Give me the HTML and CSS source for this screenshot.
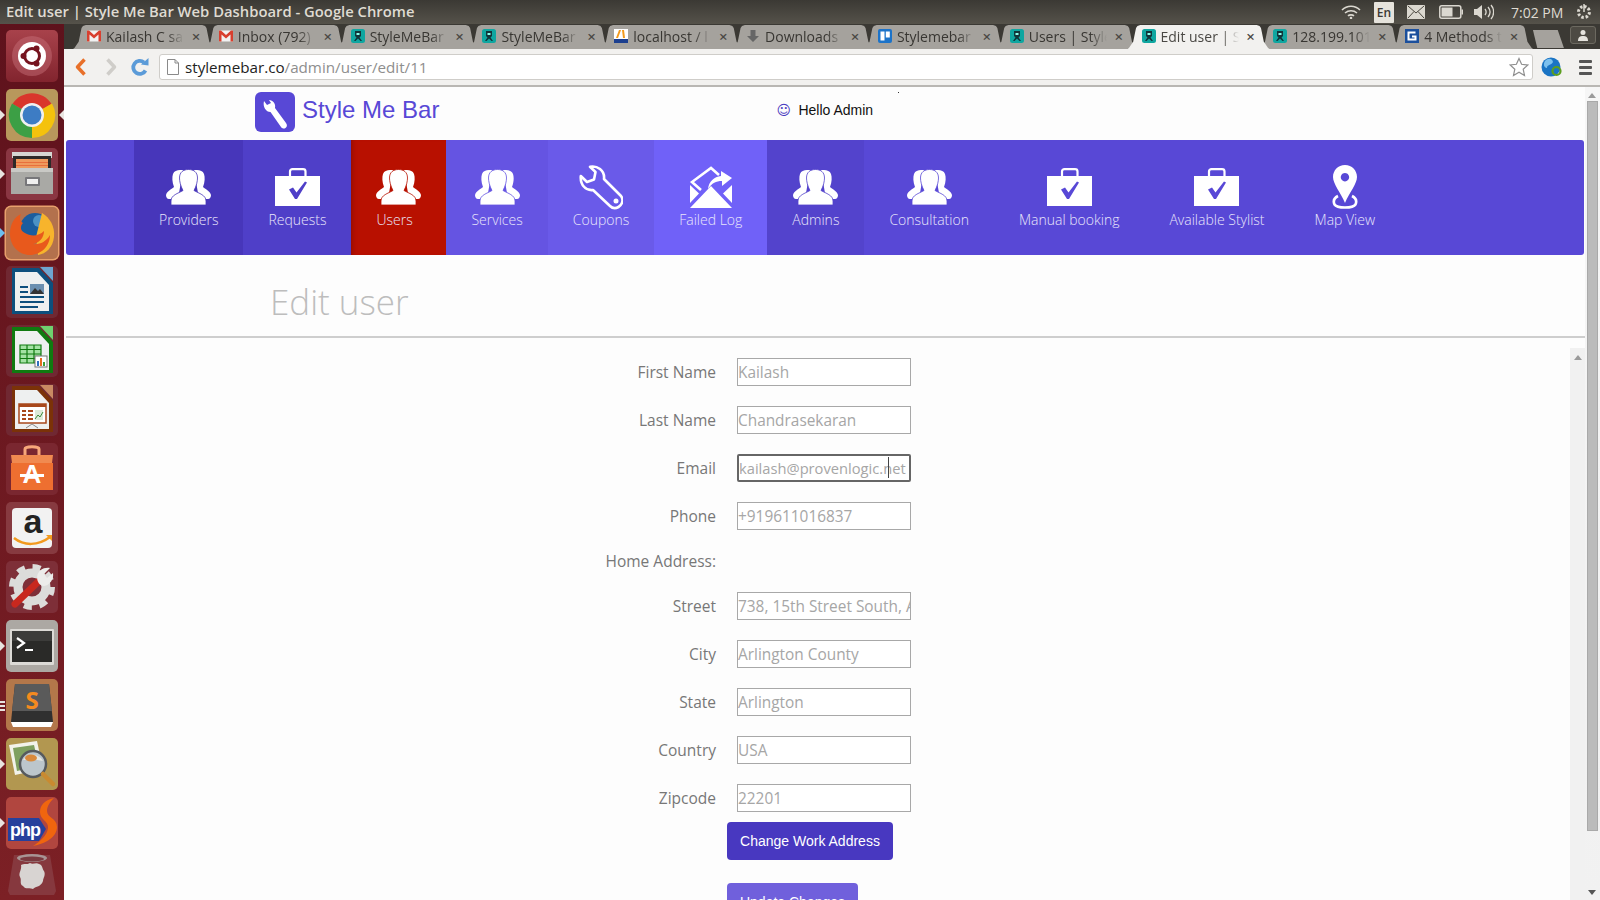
FILE: index.html
```html
<!DOCTYPE html>
<html lang="en">
<head>
<meta charset="utf-8">
<title>Edit user | Style Me Bar Web Dashboard</title>
<link rel="stylesheet" href="styles.css">
</head>
<body>
<svg class="defs" aria-hidden="true">
  <symbol id="i-people" viewBox="0 0 45 36">
    <path fill="#fff" d="M0 26C1 22 6 20 8 18 6 13 6 8 7 5 8 2 11 1 14 1L17 1 12 30H3C1 30 0 28 0 26Z"/>
    <path fill="#fff" d="M45 26C44 22 39 20 37 18 39 13 39 8 38 5 37 2 34 1 31 1L28 1 33 30H42C44 30 45 28 45 26Z"/>
    <path class="cut" fill="#fff" d="M5 36V32C5 26 12 24.500 17 21.500 14.500 17 13.500 12 13.500 9 13.500 3 17.500 .5 22.500 .5 27.500 .5 31.500 3 31.500 9 31.500 12 30.500 17 28 21.500 33 24.500 40 26 40 32V36Z"/>
  </symbol>
  <symbol id="i-case" viewBox="0 0 45 38">
    <path fill="none" stroke="#fff" stroke-width="2.200" d="M15 8V3.500C15 2 16 1.200 17.500 1.200H28C29.500 1.200 30.500 2 30.500 3.500V8"/>
    <path fill="#fff" d="M0 8H45V38H0Z"/>
    <path class="chk" d="M14 21.500L18 19.500 21.500 24.500 30 13.500 32 14.500 22 31H20Z"/>
  </symbol>
  <symbol id="fav-s" viewBox="0 0 14 14">
    <rect width="14" height="14" rx="2.500" fill="#0fa6a0"/>
    <path fill="#12343a" d="M4 2H10V7L8.500 8.500 11 12H9.500L7 9.500 4.500 12H3L5.500 8.500 4 7Z"/>
    <path fill="#8fe" d="M5.500 4H8.500V6H5.500Z"/>
  </symbol>
  <symbol id="fav-m" viewBox="0 0 14 14">
    <rect y="1.500" width="14" height="11" fill="#f2f2f2"/>
    <path fill="#d8402f" d="M0 1.500H2L7 6 12 1.500H14V12.500H11.500V5.500L7 9.500 2.500 5.500V12.500H0Z"/>
  </symbol>
</svg>

<div class="screen">
  <header class="titlebar">
    <span class="win-title">Edit user | Style Me Bar Web Dashboard - Google Chrome</span>
    <div class="indicators">
      <svg class="ind-wifi" viewBox="0 0 20 14" width="20" height="14"><path fill="none" stroke="#dbd8d0" stroke-width="1.600" d="M1 5C6 0 14 0 19 5M4 8C7.500 5 12.500 5 16 8M7 10.800C8.500 9.500 11.500 9.500 13 10.800"/><circle cx="10" cy="13" r="1.300" fill="#dbd8d0"/></svg>
      <span class="ind-en">En</span>
      <svg class="ind-mail" viewBox="0 0 18 14" width="18" height="14"><rect width="18" height="14" rx="1" fill="#dbd8d0"/><path fill="none" stroke="#4a473f" d="M1 1L9 8 17 1M1 13L7 6.500M17 13L11 6.500"/></svg>
      <svg class="ind-batt" viewBox="0 0 24 14" width="24" height="14"><rect x=".8" y=".8" width="21" height="12.400" rx="2" fill="none" stroke="#dbd8d0" stroke-width="1.500"/><rect x="2.500" y="2.500" width="11" height="9" fill="#dbd8d0"/><rect x="22.500" y="4.500" width="1.500" height="5" fill="#dbd8d0"/></svg>
      <svg class="ind-vol" viewBox="0 0 20 16" width="20" height="16"><path fill="#dbd8d0" d="M0 5H3L8 1V15L3 11H0Z"/><path fill="none" stroke="#dbd8d0" stroke-width="1.300" d="M11 5C12.500 7 12.500 9 11 11M14 3C16.500 6 16.500 10 14 13M17 1C20.500 5 20.500 11 17 15"/></svg>
      <span class="ind-time">7:02 PM</span>
      <svg class="ind-gear" viewBox="0 0 16 18" width="16" height="18"><path fill="none" stroke="#dbd8d0" stroke-width="3" stroke-dasharray="2.500 1.800" d="M8 3.500A5.500 5.500 0 1 1 7.900 3.500"/><path fill="none" stroke="#dbd8d0" stroke-width="1.500" d="M8 1V9"/></svg>
    </div>
  </header>

  <div class="desktop">
    <aside class="launcher">
      <div class="tile t-ubuntu"><svg viewBox="0 0 52 52"><circle cx="26" cy="26" r="20" fill="#c9747c" opacity=".45"/><circle cx="26" cy="26" r="14" fill="#fff"/><circle cx="26" cy="26" r="7.500" fill="none" stroke="#76141f" stroke-width="3"/><circle cx="17.500" cy="26" r="3" fill="#76141f"/><circle cx="30.500" cy="18.500" r="3" fill="#76141f"/><circle cx="30.500" cy="33.500" r="3" fill="#76141f"/></svg></div>
      <div class="tile t-chrome pip pip-both"><svg viewBox="0 0 52 52"><path fill="#d9362c" d="M26 26L6.500 15A23 23 0 0 1 45.500 15Z"/><path fill="#f4c20d" d="M26 26L46 14.500A23 23 0 0 1 26 49Z"/><path fill="#3c9f45" d="M26 26L26 49A23 23 0 0 1 6 14.500Z"/><circle cx="26" cy="26" r="12" fill="#f0f0f0"/><circle cx="26" cy="26" r="9.500" fill="#3d7cc4"/></svg></div>
      <div class="tile t-files pip"><svg viewBox="0 0 52 52"><path fill="#d6d6d2" d="M6 4H46V10H6Z"/><path fill="#2d2a28" d="M7 8H45V20H7Z"/><path fill="#ef9a5c" d="M10 11H42V20H10Z"/><path fill="#e86f3c" d="M10 14H42V15H10ZM10 17H42V18H10Z"/><path fill="#a9a9a5" d="M5 20H47V46H5Z"/><path fill="#c9c9c5" d="M5 20H47V24H5Z"/><rect x="19" y="29" width="15" height="9" rx="1" fill="#77777a"/><rect x="21" y="31" width="11" height="5" fill="#f0f0f0"/></svg></div>
      <div class="tile t-fox pip pip-blue"><svg viewBox="0 0 52 52"><circle cx="29" cy="21" r="15" fill="#1b5d9e"/><circle cx="33" cy="14" r="6" fill="#6cb6e0" opacity=".6"/><path fill="#f7b42c" d="M36 6C44 11 49 19 48 30 47 40 40 47 32 48L30 30Z"/><path fill="#e8591c" d="M4 27C4 16 9 10 15 7 13 11 14 14 17 16 14 19 14 24 19 26 25 30 33 29 38 24 38 31 33 36 27 37 33 38 40 35 44 28 44 39 35 48 24 48 13 48 4 39 4 27Z"/></svg></div>
      <div class="tile t-doc"><svg viewBox="0 0 52 52"><path fill="#0d4f7d" d="M6 2H33L47 17V48H6Z"/><path fill="#eef0f0" d="M9 6H31L43 19V45H9Z"/><path fill="#6ea5d0" d="M34 1H47V15Z"/><path fill="#0d4f7d" d="M14 20H22V22H14ZM14 25H22V27H14ZM14 30H38V32H14ZM14 35H38V37H14ZM14 40H32V42H14Z"/><rect x="24" y="18" width="14" height="10" fill="#6b8fb0"/><path fill="#333" d="M24 28L29 22 32 25 34 23 38 28Z"/></svg></div>
      <div class="tile t-doc"><svg viewBox="0 0 52 52"><path fill="#107a10" d="M6 2H33L47 17V48H6Z"/><path fill="#eef0f0" d="M9 6H31L43 19V45H9Z"/><path fill="#6fd16f" d="M34 1H47V15Z"/><path fill="#a4e2a4" d="M14 20H35V38H14Z"/><path fill="none" stroke="#107a10" stroke-width="1.200" d="M14 20H35V38H14ZM14 24.500H35M14 29H35M14 33.500H35M21 20V38M28 20V38"/><rect x="29" y="31" width="12" height="11" fill="#fff" stroke="#777"/><path fill="#2f6fbf" d="M31 36H33V41H31Z"/><path fill="#e66a1f" d="M34 33H36V41H34Z"/><path fill="#3a9f3a" d="M37 37H39V41H37Z"/></svg></div>
      <div class="tile t-doc"><svg viewBox="0 0 52 52"><path fill="#7b3208" d="M6 2H33L47 17V48H6Z"/><path fill="#eef0f0" d="M9 6H31L43 19V45H9Z"/><path fill="#c98a63" d="M34 1H47V15Z"/><rect x="13" y="20" width="27" height="19" fill="#fff" stroke="#a8481c" stroke-width="1.500"/><path fill="#a8481c" d="M13 20H40V23H13ZM16 26H20V28H16ZM22 26H27V28H22ZM16 30H20V32H16ZM22 30H27V32H22ZM16 34H20V36H16ZM22 34H27V36H22Z"/><rect x="29" y="26" width="8" height="10" fill="#dcead8"/><path fill="none" stroke="#3d8c3d" d="M29 35L32 31 34 33 37 28"/><path fill="none" stroke="#888" d="M20 44L26 40 32 44"/></svg></div>
      <div class="tile t-shop"><svg viewBox="0 0 52 52"><path fill="none" stroke="#f7a77a" stroke-width="3" d="M19 12V6C19 3 33 3 33 6V12"/><path fill="#f08a50" d="M5 12H47L46 20H6Z"/><path fill="#ee6f30" d="M5 20H47V47H5Z"/><text class="shop-a" x="26" y="40">A</text><path fill="#fff" d="M14 31H38V34H14Z"/></svg></div>
      <div class="tile t-amz"><svg viewBox="0 0 52 52"><rect x="6" y="6" width="40" height="40" rx="4" fill="#f2f2f2"/><text class="amz-a" x="27" y="31">a</text><path fill="none" stroke="#f29a1f" stroke-width="2.500" d="M8 36C18 44 32 44 44 35"/><path fill="#f29a1f" d="M40 33H46V39Z"/></svg></div>
      <div class="tile t-set"><svg viewBox="0 0 52 52"><circle cx="26" cy="26" r="14" fill="none" stroke="#dcdcda" stroke-width="9"/><circle cx="26" cy="26" r="20" fill="none" stroke="#dcdcda" stroke-width="6" stroke-dasharray="8 7.700"/><path stroke="#c8281e" stroke-width="7" stroke-linecap="round" d="M9 43L33 20"/><path fill="#ececea" d="M31 16C32 9 38 6 44 7L38 13 41 17 47 12C48 18 44 24 38 25 34 25 31 21 31 16Z"/></svg></div>
      <div class="tile t-term pip"><svg viewBox="0 0 52 52"><rect x="4" y="9" width="44" height="36" rx="1" fill="#dcdad6"/><rect x="6" y="11" width="40" height="31" fill="#2a2a28"/><rect x="6" y="11" width="40" height="10" fill="#3c3c3a"/><path fill="none" stroke="#fff" stroke-width="2.200" d="M11 18L18 23 11 28"/><path fill="#fff" d="M19 29H27V31H19Z"/></svg></div>
      <div class="tile t-subl pip pip-multi"><svg viewBox="0 0 52 52"><path fill="#fff" d="M5 43H47L45 48H7Z"/><path fill="#303030" d="M9 5H43L47 43H5Z"/><path fill="#5a5a5a" d="M9 5H43L46 32H6Z"/><text class="subl-s" x="26" y="30">S</text></svg></div>
      <div class="tile t-view pip"><svg viewBox="0 0 52 52"><path fill="#f2f2ea" d="M3 7L31 3 37 31 9 37Z"/><path fill="#7fa060" d="M7 10L28 7 33 28 11 33Z"/><circle cx="27" cy="26" r="13" fill="#bcc6cc" stroke="#565a5e" stroke-width="2.500"/><path fill="#e6e6e0" d="M17 22C23 14 33 16 37 23 29 21 24 22 17 22Z"/><ellipse cx="25" cy="20" rx="6" ry="3.500" fill="#d98a3c"/><path stroke="#c98a30" stroke-width="4.500" stroke-linecap="round" d="M37 36L47 46"/></svg></div>
      <div class="tile t-php pip"><svg viewBox="0 0 52 52"><path fill="#f0650e" d="M48 1C38 3 34 9 34 15 34 23 43 24 42 31 41 39 33 45 27 49 39 47 51 40 51 30 51 21 41 21 41 14 41 9 44 5 48 1Z"/><path fill="#26409c" d="M2 21H33L40 32 33 44H2Z"/><text class="php-t" x="4" y="39">php</text></svg></div>
      <div class="tile t-trash"><svg viewBox="0 0 52 46"><path fill="#8e4a50" d="M8 4H44L50 40 48 44H4L2 40Z" opacity=".6"/><ellipse cx="26" cy="7" rx="15" ry="4" fill="#a89494"/><ellipse cx="26" cy="8" rx="12" ry="2.500" fill="#7a3a40"/><path fill="#d8d4d2" d="M15 14C18 12 21 14 24 12 27 14 30 11 33 13 37 14 36 18 38 20 40 24 37 27 37 30 35 36 30 35 27 38 23 36 20 39 17 35 13 33 16 29 14 26 12 22 16 19 15 14Z"/></svg></div>
    </aside>

    <div class="window">
      <div class="tabstrip">
        <div class="tab"><svg class="fav"><use href="#fav-m"/></svg><span class="tab-title">Kailash C sa</span><span class="tab-x">×</span></div>
        <div class="tab"><svg class="fav"><use href="#fav-m"/></svg><span class="tab-title">Inbox (792)</span><span class="tab-x">×</span></div>
        <div class="tab"><svg class="fav"><use href="#fav-s"/></svg><span class="tab-title">StyleMeBar</span><span class="tab-x">×</span></div>
        <div class="tab"><svg class="fav"><use href="#fav-s"/></svg><span class="tab-title">StyleMeBar</span><span class="tab-x">×</span></div>
        <div class="tab"><svg class="fav" viewBox="0 0 14 14"><rect width="14" height="14" fill="#fff"/><path fill="#f39a1d" d="M5 1L7 1 4 9H2ZM8 1L10 1 11 9H9Z"/><path fill="#1c3f8f" d="M0 10H14V14H0Z"/></svg><span class="tab-title">localhost / l</span><span class="tab-x">×</span></div>
        <div class="tab"><svg class="fav" viewBox="0 0 14 14"><path fill="#666" d="M4.500 1H9.500V7H13L7 13 1 7H4.500Z"/></svg><span class="tab-title">Downloads</span><span class="tab-x">×</span></div>
        <div class="tab"><svg class="fav" viewBox="0 0 14 14"><rect width="14" height="14" rx="2" fill="#1c73c9"/><rect x="2.500" y="2.500" width="4" height="9" fill="#fff"/><rect x="7.800" y="2.500" width="4" height="6" fill="#fff"/></svg><span class="tab-title">Stylemebar</span><span class="tab-x">×</span></div>
        <div class="tab"><svg class="fav"><use href="#fav-s"/></svg><span class="tab-title">Users | Style</span><span class="tab-x">×</span></div>
        <div class="tab tab-active"><svg class="fav"><use href="#fav-s"/></svg><span class="tab-title">Edit user | S</span><span class="tab-x">×</span></div>
        <div class="tab"><svg class="fav"><use href="#fav-s"/></svg><span class="tab-title">128.199.101</span><span class="tab-x">×</span></div>
        <div class="tab"><svg class="fav" viewBox="0 0 14 14"><rect width="14" height="14" fill="#1b4f9c"/><path fill="none" stroke="#fff" stroke-width="2" d="M10.500 3.500H3.500V10.500H10.500V7.500H7"/></svg><span class="tab-title">4 Methods t</span><span class="tab-x">×</span></div>
        <div class="newtab"></div>
        <div class="userbtn"><svg viewBox="0 0 12 12" width="12" height="12"><circle cx="6" cy="3.500" r="2.500" fill="#e6e4de"/><path fill="#e6e4de" d="M1 12C1 8 3 7 6 7S11 8 11 12Z"/></svg></div>
      </div>

      <div class="toolbar">
        <svg class="tb-back" viewBox="0 0 14 20" width="14" height="20"><path fill="none" stroke="#e8702a" stroke-width="3.500" stroke-linejoin="round" d="M10.500 2.500L3.500 10 10.500 17.500"/></svg>
        <svg class="tb-fwd" viewBox="0 0 14 20" width="14" height="20"><path fill="none" stroke="#cfcdc9" stroke-width="3.500" stroke-linejoin="round" d="M3.500 2.500L10.500 10 3.500 17.500"/></svg>
        <svg class="tb-reload" viewBox="0 0 20 20" width="20" height="20"><path fill="none" stroke="#5b9bd8" stroke-width="3.800" d="M15.500 13.500A6.500 6.500 0 1 1 14 5.500"/><path fill="#5b9bd8" d="M11 7.500L18.500 8.500 18.500 1Z"/></svg>
        <div class="omnibox">
          <svg class="page-ico" viewBox="0 0 12 16" width="12" height="16"><path fill="#fff" stroke="#8a8a8a" d="M.5 .5H8L11.500 4V15.500H.5Z"/><path fill="none" stroke="#8a8a8a" d="M8 .5V4H11.500"/></svg>
          <span class="url"><b class="url-host">stylemebar.co</b>/admin/user/edit/11</span>
          <svg class="star" viewBox="0 0 20 20" width="20" height="20"><path fill="#fff" stroke="#8f8f8f" stroke-width="1.200" d="M10 1.500L12.600 7.300 18.800 8 14.200 12.200 15.500 18.500 10 15.300 4.500 18.500 5.800 12.200 1.200 8 7.400 7.300Z"/></svg>
        </div>
        <svg class="tb-globe" viewBox="0 0 22 22" width="22" height="22"><circle cx="10" cy="11" r="9.500" fill="#1b74c4"/><path fill="#7cc0ee" d="M4 5C7 2 11 2 12 6 10 10 6 8 6 12 3 12 2 8 4 5Z"/><circle cx="15.500" cy="15" r="4" fill="none" stroke="#5c9e1f" stroke-width="2.200"/></svg>
        <div class="tb-menu"><i></i><i></i><i></i></div>
      </div>

      <div class="viewport">
        <main class="page">
          <div class="brandbar">
            <div class="logo"><svg viewBox="0 0 40 40" width="40" height="40"><path fill="#fff" d="M9 9L12 13 16 11 14 8C18 8 21 12 20 16L31 31C32.500 33 32 35 30.500 36 29 37 27 36.500 26 35L15.500 20C11 20 7.500 15 9 9Z"/></svg></div>
            <span class="brand">Style Me Bar</span>
            <span class="hello"><span class="smile">☺</span>Hello Admin</span>
            <span class="dot"></span>
          </div>

          <nav class="mainnav">
            <a class="nav-item n-providers"><svg class="ic-people"><use href="#i-people"/></svg><span>Providers</span></a>
            <a class="nav-item n-requests"><svg class="ic-case"><use href="#i-case"/></svg><span>Requests</span></a>
            <a class="nav-item n-users"><svg class="ic-people"><use href="#i-people"/></svg><span class="lbl-users">Users</span></a>
            <a class="nav-item n-services"><svg class="ic-people"><use href="#i-people"/></svg><span>Services</span></a>
            <a class="nav-item n-coupons"><svg class="ic-wrench" viewBox="0 0 44 45"><path fill="none" stroke="#fff" stroke-width="2.600" stroke-linejoin="round" d="M11 1.800C18 .5 26 5 25 14L42 31C45 35 43 40 39.500 42 36 44 33 43 31 41L14 25C7 26 1 20 1.800 11L8 17 15 14.500 16.500 7Z"/><circle cx="37" cy="36" r="2.500" fill="#fff"/></svg><span>Coupons</span></a>
            <a class="nav-item n-failed"><svg class="ic-mail" viewBox="0 0 44 42"><path fill="#fff" d="M1 42L22 20 43 42ZM1 19V37L10 27.500ZM43 19V37L34 27.500Z"/><path fill="none" stroke="#fff" stroke-width="2.600" d="M12 24L3 16 22 2 30 9"/><path fill="#fff" d="M19 23C20 15 25 11 32 10V5L43 12 33 20V15C27 15 23 17 19 23Z"/></svg><span>Failed Log</span></a>
            <a class="nav-item n-admins"><svg class="ic-people"><use href="#i-people"/></svg><span>Admins</span></a>
            <a class="nav-item"><svg class="ic-people"><use href="#i-people"/></svg><span>Consultation</span></a>
            <a class="nav-item"><svg class="ic-case"><use href="#i-case"/></svg><span>Manual booking</span></a>
            <a class="nav-item"><svg class="ic-case"><use href="#i-case"/></svg><span>Available Stylist</span></a>
            <a class="nav-item"><svg class="ic-pin" viewBox="0 0 26 45"><path fill="#fff" fill-rule="evenodd" d="M13 0C6 0 1 5.500 1 12 1 19 9 28 13 38 17 28 25 19 25 12 25 5.500 20 0 13 0ZM13 8A4.200 4.200 0 1 1 12.900 8Z"/><path fill="none" stroke="#fff" stroke-width="2.600" d="M6 31C2 33 1 36 2.500 39.500 5 43.500 21 43.500 23.500 39.500 25 36 24 33 20 31"/></svg><span>Map View</span></a>
          </nav>

          <h1 class="page-title">Edit user</h1>

          <div class="work">
            <form class="edit-form">
              <label class="row"><span class="lbl">First Name</span><input class="field" value="Kailash"></label>
              <label class="row"><span class="lbl">Last Name</span><input class="field" value="Chandrasekaran"></label>
              <label class="row"><span class="lbl">Email</span><span class="field-wrap"><input class="field field-focus" value="kailash@provenlogic.net"><i class="caret"></i></span></label>
              <label class="row"><span class="lbl">Phone</span><input class="field" value="+919611016837"></label>
              <div class="row row-head"><span class="lbl">Home Address:</span></div>
              <label class="row"><span class="lbl">Street</span><input class="field" value="738, 15th Street South, Arlington"></label>
              <label class="row"><span class="lbl">City</span><input class="field" value="Arlington County"></label>
              <label class="row"><span class="lbl">State</span><input class="field" value="Arlington"></label>
              <label class="row"><span class="lbl">Country</span><input class="field" value="USA"></label>
              <label class="row row-last"><span class="lbl">Zipcode</span><input class="field" value="22201"></label>
              <button type="button" class="btn btn-work">Change Work Address</button>
              <button type="button" class="btn btn-update">Update Changes</button>
            </form>
            <div class="inner-scroll"><span class="arrow-up"></span></div>
          </div>
        </main>
        <div class="scrollbar">
          <span class="arrow-up"></span>
          <div class="thumb"></div>
          <span class="arrow-down"></span>
        </div>
      </div>
    </div>
  </div>
</div>
</body>
</html>
```

FILE: styles.css
```css
* { box-sizing: border-box; }
html, body { margin: 0; padding: 0; height: 100%; overflow: hidden; }
body { font-family: "Open Sans", sans-serif; background: #fdfdfd; }
.defs { position: absolute; width: 0; height: 0; }

.screen { width: 1600px; height: 900px; display: flex; flex-direction: column; overflow: hidden; }

/* panel */
.titlebar { height: 24px; flex: none; display: flex; align-items: center; justify-content: space-between; padding-left: 6px; background: linear-gradient(#3b3934, #55524a); }
.win-title { font-size: 14.800px; font-weight: 600; line-height: 22px; margin-bottom: 2px; color: #dfdbd2; white-space: nowrap; }
.indicators { display: flex; align-items: center; height: 24px; }
.ind-wifi { margin-right: 13px; }
.ind-en { width: 20px; height: 21px; background: #e6e3dc; color: #3c3a34; font-size: 12px; font-weight: 600; text-align: center; line-height: 21px; border-radius: 1px; margin-right: 13px; }
.ind-mail { margin-right: 14px; }
.ind-batt { margin-right: 11px; }
.ind-vol { margin-right: 17px; }
.ind-time { font-size: 14px; color: #dfdbd2; white-space: nowrap; width: 52px; margin-right: 13px; }
.ind-gear { margin-right: 8px; }

.desktop { flex: 1; display: flex; min-height: 0; }

/* launcher */
.launcher { width: 64px; flex: none; display: flex; flex-direction: column; gap: 7px; padding: 6px 0 0 6px; background: linear-gradient(#5e121c, #7c2025); }
.tile { width: 52px; height: 52px; flex: none; border-radius: 5px; position: relative; }
.tile svg { display: block; width: 52px; height: 52px; }
.t-ubuntu { background: linear-gradient(#a8424b, #82242e); }
.t-chrome { background: #b8985c; }
.t-files { background: #8a3642; }
.t-fox { background: #b3714d; box-shadow: 0 0 0 1.500px #e8a06c; }
.t-doc { background: #702832; }
.t-shop { background: #7a2730; }
.t-amz { background: #873a40; }
.t-set { background: #7e2f38; }
.t-term { background: #aca8a3; }
.t-subl { background: #b3774a; }
.t-view { background: #b29750; }
.t-php { background: #b1463f; margin-bottom: -5px; }
.t-trash { background: none; height: 46px; }
.t-trash svg { height: 46px; }
.shop-a { font: bold 26px "Liberation Sans", sans-serif; fill: #fff; text-anchor: middle; }
.amz-a { font: bold 34px "Liberation Sans", sans-serif; fill: #222; text-anchor: middle; }
.subl-s { font: bold 24px "Open Sans", sans-serif; fill: #f58a1f; text-anchor: middle; }
.php-t { font: bold 18px "Liberation Sans", sans-serif; letter-spacing: -1px; fill: #fff; }

.pip::before { content: ""; position: absolute; left: -6px; top: 21px; border-left: 5px solid #e8e4e0; border-top: 5px solid transparent; border-bottom: 5px solid transparent; }
.pip-blue::before { border-left-color: #6cc0ef; }
.pip-both::after { content: ""; position: absolute; right: -6px; top: 21px; border-right: 5px solid #e8e4e0; border-top: 5px solid transparent; border-bottom: 5px solid transparent; }
.pip-multi::before { left: -6px; top: 22px; width: 5px; height: 2px; border: 0; background: #e8e4e0; box-shadow: 0 4px 0 #e8e4e0, 0 8px 0 #e8e4e0; }

/* browser */
.window { flex: 1; min-width: 0; display: flex; flex-direction: column; }
.tabstrip { height: 25px; flex: none; display: flex; align-items: flex-end; padding-left: 9px; background: #3b3934; }
.tab { width: 142px; height: 24px; flex: none; margin-right: -10.200px; display: flex; align-items: center; padding: 0 0 2px 14px; background: #a5a29d; clip-path: polygon(0 100%, 1% 96%, 4% 70%, 6% 12%, 7% 4%, 9% 0, 91% 0, 93% 4%, 94% 12%, 96% 70%, 99% 96%, 100% 100%); color: #383632; font-size: 14px; }
.tab-active { background: #f2f1ef; position: relative; z-index: 1; color: #4a4844; }
.fav { width: 14px; height: 14px; flex: none; margin-right: 5px; }
.tab-title { width: 78px; flex: none; overflow: hidden; white-space: nowrap; -webkit-mask-image: linear-gradient(90deg, #000 78%, transparent); mask-image: linear-gradient(90deg, #000 78%, transparent); }
.tab-x { width: 14px; margin-left: 5px; text-align: center; font-size: 15px; font-weight: 600; color: #4a4844; flex: none; }
.newtab { width: 31px; height: 18px; flex: none; margin-left: 10px; background: #a5a29d; clip-path: polygon(0 0, 80% 0, 100% 100%, 14% 100%); align-self: flex-end; margin-bottom: 1px; }
.userbtn { width: 26px; height: 18px; flex: none; margin-left: 6px; margin-bottom: 5px; background: #4d4a43; border: 1px solid #6c6960; border-radius: 3px; display: flex; align-items: center; justify-content: center; }

.toolbar { height: 38px; flex: none; display: flex; align-items: center; background: #f2f1ef; border-bottom: 2px solid #b9b7b3; padding: 0 8px 0 10px; }
.tb-back { margin-right: 16px; }
.tb-fwd { margin-right: 12px; }
.omnibox { margin-left: 9px; flex: 1; height: 26px; display: flex; align-items: center; background: #fff; border: 1px solid #cfcdc9; border-radius: 3px; padding: 0 3px 0 7px; }
.page-ico { margin-right: 6px; flex: none; }
.url { flex: 1; font-size: 15.200px; color: #8e8e8e; white-space: nowrap; }
.url-host { font-weight: 400; color: #222; }
.tb-globe { margin: 0 16px 0 8px; }
.tb-menu { width: 13px; display: flex; flex-direction: column; gap: 3px; }
.tb-menu i { display: block; height: 3px; background: #555; border-radius: 1px; }

.viewport { flex: 1; display: flex; min-height: 0; }
.page { flex: 1; min-width: 0; display: flex; flex-direction: column; background: #fdfdfd; }

.brandbar { height: 53px; flex: none; display: flex; align-items: center; padding-left: 191px; position: relative; }
.logo { width: 40px; height: 40px; flex: none; border-radius: 6px; background: #5848d6; margin-top: -3px; }
.logo svg { display: block; }
.brand { margin-left: 7px; font: 24px "Liberation Sans", sans-serif; color: #5848d6; white-space: nowrap; margin-top: -7px; }
.hello { margin-left: 337px; font: 14px "Liberation Sans", sans-serif; color: #111; white-space: nowrap; margin-top: -7px; display: flex; align-items: center; }
.smile { width: 22px; font: 14px "DejaVu Sans", sans-serif; color: #4a3ac0; }
.dot { position: absolute; left: 834px; top: 5px; width: 1px; height: 1px; background: #333; }

.mainnav { height: 115px; flex: none; margin: 0 1px 0 2px; display: flex; padding-left: 68px; background: #5848d6; border-radius: 3px; }
.nav-item { --bg: #5848d6; background: var(--bg); padding: 25px 25px 0; display: flex; flex-direction: column; align-items: center; color: #e9e6fb; font-size: 14px; font-weight: 300; white-space: nowrap; }
.nav-item span { display: block; margin-top: auto; padding-bottom: 25px; line-height: 20px; }
.n-providers { --bg: #4736ba; }
.n-requests { --bg: #4f3fc8; }
.n-users { --bg: #b81000; box-shadow: inset 5px 0 5px -4px #8c0c00; }
.n-services { --bg: #6554e2; }
.n-coupons { --bg: #6a5ae9; }
.n-failed { --bg: #7061f8; }
.n-admins { --bg: #5343cc; }
.lbl-users { padding-right: 8px; width: 45px; }
.cut { stroke: var(--bg); stroke-width: .8; }
.chk { fill: var(--bg); }
.ic-people { width: 45px; height: 36px; margin-top: 4px; flex: none; }
.ic-case { width: 45px; height: 38px; margin-top: 3px; flex: none; }
.ic-wrench { width: 44px; height: 45px; flex: none; }
.ic-mail { width: 44px; height: 42px; margin-top: 1px; flex: none; }
.ic-pin { width: 26px; height: 45px; flex: none; }

.page-title { height: 83px; flex: none; margin: 0 0 0 2px; padding: 22px 0 0 204px; font-size: 35px; font-weight: 300; line-height: 50px; color: #bdbdbd; border-bottom: 2px solid #cecece; }

.work { flex: 1; min-height: 0; display: flex; overflow: hidden; }
.edit-form { flex: 1; min-width: 0; padding: 20px 0 0 452px; }
.row { display: flex; align-items: center; height: 28px; margin-bottom: 20px; }
.row-head { height: 22px; }
.row-last { margin-bottom: 10px; }
.lbl { width: 200px; flex: none; margin-right: 20px; text-align: right; font-size: 15.500px; color: #777; white-space: nowrap; }
.row > .field, .field-wrap { margin-left: 1px; }
.field { width: 174px; height: 28px; padding: 0; border: 1px solid #a8a8a8; border-radius: 0; background: #fff; font: 15.400px "Open Sans", sans-serif; color: #a6a6a6; outline: none; }
.field-wrap { position: relative; display: block; width: 174px; height: 28px; }
.field-focus { display: block; border: 2px solid #666; border-radius: 2px; padding: 0; margin: 0; font-size: 14.700px; }
.caret { position: absolute; left: 151px; top: 3px; width: 1px; height: 21px; background: #444; }
.btn { display: block; font: 14px "Liberation Sans", sans-serif; color: #fff; height: 38px; border: 0; border-radius: 4px; padding: 0 12px; margin: 0 0 23px 211px; }
.btn-work { width: 166px; background: #4838c0; }
.btn-update { width: 131px; background: #7060dc; }

.inner-scroll { width: 15px; flex: none; margin-top: 10px; background: #f1f1f1; display: flex; justify-content: center; padding-top: 7px; }

.scrollbar { width: 15px; flex: none; display: flex; flex-direction: column; align-items: flex-start; padding: 6px 0 5px 2px; background: linear-gradient(#f6f6f6, #f1f1f1); }
.arrow-up, .arrow-down { display: block; width: 0; height: 0; border-left: 4px solid transparent; border-right: 4px solid transparent; flex: none; }
.arrow-up { border-bottom: 5px solid #9a9a9a; }
.arrow-down { border-top: 5px solid #555; margin-top: auto; }
.thumb { width: 11px; height: 730px; margin-top: 3px; background: #bbb; border: 1px solid #a9a9a9; }
.scrollbar .arrow-up, .scrollbar .arrow-down { margin-left: 1px; }
```
